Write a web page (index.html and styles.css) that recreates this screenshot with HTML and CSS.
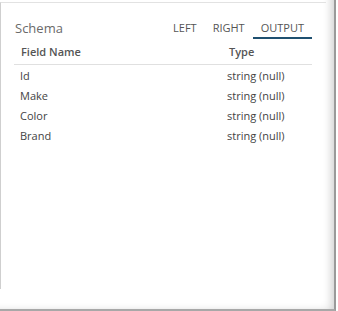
FILE: index.html
```html
<!DOCTYPE html>
<html>
<head>
<meta charset="utf-8">
<link rel="stylesheet" href="styles.css">
</head>
<body>
<div class="window">
  <div class="panel">
    <div class="header">
      <div class="title">Schema</div>
      <div class="tabs">
        <div class="tab">LEFT</div>
        <div class="tab">RIGHT</div>
        <div class="tab active">OUTPUT</div>
      </div>
    </div>
    <div class="table">
      <div class="row head"><div class="c1">Field Name</div><div class="c2">Type</div></div>
      <div class="body">
        <div class="row"><div class="c1">Id</div><div class="c2">string (null)</div></div>
        <div class="row"><div class="c1">Make</div><div class="c2">string (null)</div></div>
        <div class="row"><div class="c1">Color</div><div class="c2">string (null)</div></div>
        <div class="row"><div class="c1">Brand</div><div class="c2">string (null)</div></div>
      </div>
    </div>
  </div>
</div>
</body>
</html>
```
FILE: styles.css
```css
html, body {
  margin: 0;
  padding: 0;
  background: #fff;
}
body {
  font-family: "Open Sans", "Noto Sans", sans-serif;
  color: #444;
}
.window {
  width: 334px;
  height: 309px;
  border-right: 2px solid #9a9a9a;
  border-bottom: 2px solid #a8a8a8;
  box-shadow: inset -9px -4px 8px -6px rgba(0, 0, 0, 0.18);
  overflow: hidden;
}
.panel {
  margin-top: 2px;
  width: 312px;
  height: 287px;
  border-top: 1px solid #e2e2e2;
  border-left: 1px solid #cfcfcf;
  padding-left: 13px;
  box-sizing: border-box;
  width: 326px;
  padding-right: 13px;
}
.header {
  display: flex;
  justify-content: space-between;
  align-items: flex-end;
  padding-top: 16px;
  width: 298px;
}
.title {
  font-size: 13px;
  line-height: 18px;
  color: #6a6a6a;
  margin-bottom: 2px;
  padding-left: 1px;
}
.tabs {
  display: flex;
}
.tab {
  font-size: 11px;
  line-height: 14px;
  color: #555;
  padding: 0 8px 2px;
  border-bottom: 2px solid transparent;
}
.tab.active {
  border-bottom-color: #1f5070;
}
.table {
  width: 298px;
}
.row {
  display: flex;
  font-size: 11px;
  line-height: 20px;
  color: #444;
}
.row.head {
  line-height: 14px;
  padding: 6px 0 5px;
  border-bottom: 1px solid #e0e0e0;
  font-weight: 600;
  color: #555;
}
.body {
  padding-top: 1px;
}
.c1 {
  width: 213px;
  padding-left: 6px;
  box-sizing: border-box;
}
.head .c1 {
  padding-left: 7px;
}
.head .c2 {
  padding-left: 2px;
}
.c2 {
  flex: 1;
}
```
